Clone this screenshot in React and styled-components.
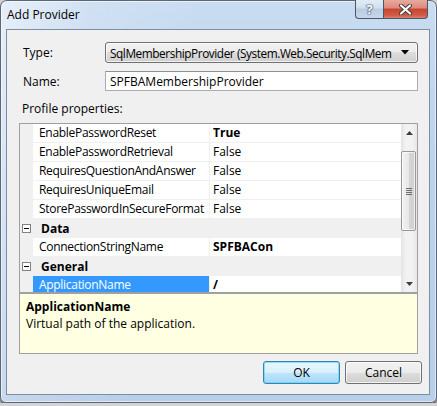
import React from 'react';
import styled, { createGlobalStyle } from 'styled-components';

const GlobalStyle = createGlobalStyle`
    html, body {
        margin: 0;
        padding: 0;
        background: #d4d4d4;
    }
    body {
        font-family: "Open Sans", "Noto Sans", "Liberation Sans", sans-serif;
        font-size: 12px;
        color: #000;
    }
`;

const rows = [
    { type: 'prop', name: 'EnablePasswordReset', value: 'True', bold: true },
    { type: 'prop', name: 'EnablePasswordRetrieval', value: 'False' },
    { type: 'prop', name: 'RequiresQuestionAndAnswer', value: 'False' },
    { type: 'prop', name: 'RequiresUniqueEmail', value: 'False' },
    { type: 'prop', name: 'StorePasswordInSecureFormat', value: 'False' },
    { type: 'cat', name: 'Data' },
    { type: 'prop', name: 'ConnectionStringName', value: 'SPFBACon', bold: true },
    { type: 'cat', name: 'General' },
    { type: 'prop', name: 'ApplicationName', value: '/', bold: true, selected: true },
];

function App() {
    return (
        <>
            <GlobalStyle />
            <Window>
                <TitleBar>
                    <Title>Add Provider</Title>
                    <CaptionButtons>
                        <HelpButton>?</HelpButton>
                        <CloseButton>
                            <svg width="13" height="11" viewBox="0 0 13 11">
                                <path d="M2 1.5 L11 9.5 M11 1.5 L2 9.5" stroke="#3b3b3b" strokeWidth="4" strokeLinecap="round" />
                                <path d="M2 1.5 L11 9.5 M11 1.5 L2 9.5" stroke="#fff" strokeWidth="2.2" strokeLinecap="round" />
                            </svg>
                        </CloseButton>
                    </CaptionButtons>
                </TitleBar>

                <Client>
                    <FormRow>
                        <Label>Type:</Label>
                        <Combo>
                            <ComboText>SqlMembershipProvider (System.Web.Security.SqlMem</ComboText>
                            <svg width="8" height="5" viewBox="0 0 8 5">
                                <path d="M0 0 L8 0 L4 4.5 Z" fill="#000" />
                            </svg>
                        </Combo>
                    </FormRow>
                    <FormRow $top={8}>
                        <Label>Name:</Label>
                        <TextBox>SPFBAMembershipProvider</TextBox>
                    </FormRow>

                    <SectionLabel>Profile properties:</SectionLabel>

                    <PropertyGrid>
                        <GridBody>
                            {rows.map(r =>
                                r.type === 'cat' ? (
                                    <CategoryRow key={r.name}>
                                        <Expander>
                                            <svg width="9" height="9" viewBox="0 0 9 9">
                                                <rect x="0.5" y="0.5" width="8" height="8" fill="#fff" stroke="#828282" />
                                                <path d="M2 4.5 H7" stroke="#000" />
                                            </svg>
                                        </Expander>
                                        <CategoryName>{r.name}</CategoryName>
                                    </CategoryRow>
                                ) : (
                                    <PropRow key={r.name}>
                                        <Margin />
                                        <PropName $selected={r.selected}>{r.name}</PropName>
                                        <PropValue $bold={r.bold}>{r.value}</PropValue>
                                    </PropRow>
                                )
                            )}
                        </GridBody>
                        <ScrollBar>
                            <ScrollArrow>
                                <svg width="7" height="4" viewBox="0 0 7 4">
                                    <path d="M0 4 L3.5 0 L7 4 Z" fill="#3d3d3d" />
                                </svg>
                            </ScrollArrow>
                            <Thumb>
                                <Grip />
                            </Thumb>
                            <ScrollArrow $down>
                                <svg width="7" height="4" viewBox="0 0 7 4">
                                    <path d="M0 0 L7 0 L3.5 4 Z" fill="#3d3d3d" />
                                </svg>
                            </ScrollArrow>
                        </ScrollBar>
                    </PropertyGrid>

                    <Description>
                        <DescTitle>ApplicationName</DescTitle>
                        <DescText>Virtual path of the application.</DescText>
                    </Description>

                    <ButtonRow>
                        <DialogButton $default>OK</DialogButton>
                        <DialogButton>Cancel</DialogButton>
                    </ButtonRow>
                </Client>
            </Window>
        </>
    );
}

const Window = styled.div`
    box-sizing: border-box;
    width: 437px;
    height: 403px;
    display: flex;
    flex-direction: column;
    border: 1px solid #5a6779;
    border-radius: 7px 7px 6px 6px;
    background:
        linear-gradient(100deg, rgba(255, 255, 255, 0.55) 0%, rgba(255, 255, 255, 0.15) 18%, rgba(255, 255, 255, 0) 40%),
        linear-gradient(180deg, #c9dcf1 0%, #bdd3ec 40%, #b8cfe9 100%);
    box-shadow: 0 2px 3px rgba(0, 0, 0, 0.75), inset 0 0 0 1px rgba(255, 255, 255, 0.55);
`;

const TitleBar = styled.div`
    height: 28px;
    display: flex;
    align-items: flex-start;
`;

const Title = styled.div`
    padding-left: 6px;
    line-height: 27px;
    color: #000;
`;

const CaptionButtons = styled.div`
    margin-left: auto;
    margin-right: 8px;
    display: flex;
    margin-top: -1px;
`;

const CaptionButton = styled.div`
    box-sizing: border-box;
    height: 19px;
    display: flex;
    align-items: center;
    justify-content: center;
    border: 1px solid #4a5669;
    border-top: none;
`;

const HelpButton = styled(CaptionButton)`
    width: 28px;
    border-right: none;
    border-radius: 0 0 0 4px;
    background: linear-gradient(180deg, #e2ebf5 0%, #d1dfee 45%, #b9cbe0 50%, #c6d7ea 100%);
    font-size: 13px;
    font-weight: 700;
    color: #fff;
    text-shadow: 0 0 1px #3a4656, 0 0 1px #3a4656, 0 0 2px #3a4656;
`;

const CloseButton = styled(CaptionButton)`
    width: 45px;
    border-radius: 0 0 4px 0;
    background: linear-gradient(180deg, #e9a99e 0%, #dc8a7c 45%, #c7442f 50%, #d15a47 85%, #e0826c 100%);
`;

const Client = styled.div`
    flex: 1;
    margin: 0 6px 7px 5px;
    padding: 12px 11px 10px 12px;
    display: flex;
    flex-direction: column;
    background: #f0f0f0;
    border: 1px solid #7d8ea3;
`;

const FormRow = styled.div`
    display: grid;
    grid-template-columns: 86px minmax(0, 1fr);
    align-items: center;
    margin-top: ${p => p.$top || 0}px;
`;

const Label = styled.div`
    padding-left: 4px;
`;

const Combo = styled.div`
    box-sizing: border-box;
    min-width: 0;
    height: 21px;
    display: flex;
    align-items: center;
    gap: 4px;
    padding: 0 8px 0 4px;
    border: 1px solid #707070;
    border-radius: 3px;
    background: linear-gradient(180deg, #f2f2f2 0%, #ebebeb 50%, #dddddd 50%, #cfcfcf 100%);
    box-shadow: inset 0 0 0 1px rgba(255, 255, 255, 0.7);
`;

const ComboText = styled.div`
    flex: 1;
    min-width: 0;
    overflow: hidden;
    white-space: nowrap;
    font-size: 11.8px;
    letter-spacing: -0.42px;
`;

const TextBox = styled.div`
    box-sizing: border-box;
    height: 20px;
    display: flex;
    align-items: center;
    padding-left: 4px;
    background: #fff;
    border: 1px solid #abadb3;
    border-top-color: #8e9299;
`;

const SectionLabel = styled.div`
    margin: 10px 0 6px 3px;
    height: 16px;
    line-height: 16px;
`;

const PropertyGrid = styled.div`
    box-sizing: border-box;
    height: 170px;
    display: flex;
    border: 1px solid #a0a0a0;
    background: #fff;
    overflow: hidden;
`;

const GridBody = styled.div`
    flex: 1;
    overflow: hidden;
`;

const PropRow = styled.div`
    box-sizing: border-box;
    height: 19px;
    display: grid;
    grid-template-columns: 13px 177px 1fr;
    border-bottom: 1px solid #f0f0f0;
`;

const Margin = styled.div`
    background: #f0f0f0;
`;

const PropName = styled.div`
    padding-left: 6px;
    line-height: 18px;
    white-space: nowrap;
    letter-spacing: -0.3px;
    background: ${p => (p.$selected ? '#3399ff' : '#fff')};
    color: ${p => (p.$selected ? '#fff' : '#000')};
    border-right: 1px solid #f0f0f0;
`;

const PropValue = styled.div`
    padding-left: 3px;
    line-height: 18px;
    font-weight: ${p => (p.$bold ? 700 : 400)};
`;

const CategoryRow = styled.div`
    box-sizing: border-box;
    height: 19px;
    display: flex;
    align-items: center;
    background: #f0f0f0;
`;

const Expander = styled.div`
    width: 19px;
    padding-left: 2px;
    display: flex;
    align-items: center;
`;

const CategoryName = styled.div`
    font-weight: 700;
    line-height: 18px;
`;

const ScrollBar = styled.div`
    width: 16px;
    display: flex;
    flex-direction: column;
    background: linear-gradient(90deg, #e3e3e3 0%, #f2f2f2 30%, #f2f2f2 70%, #e8e8e8 100%);
`;

const ScrollArrow = styled.div`
    height: 17px;
    display: flex;
    align-items: center;
    justify-content: center;
    margin-top: ${p => (p.$down ? 'auto' : '0')};
`;

const Thumb = styled.div`
    box-sizing: border-box;
    margin: 10px 1px 0 0;
    height: 80px;
    display: flex;
    align-items: center;
    justify-content: center;
    border: 1px solid #979797;
    border-radius: 2px;
    background: linear-gradient(90deg, #f2f2f2 0%, #e8e8e8 50%, #d6d6d6 51%, #cfcfcf 100%);
    box-shadow: inset 0 0 0 1px rgba(255, 255, 255, 0.7);
`;

const Grip = styled.div`
    width: 6px;
    height: 7px;
    background: repeating-linear-gradient(180deg, #6b6b6b 0 1px, transparent 1px 2px);
`;

const Description = styled.div`
    box-sizing: border-box;
    height: 61px;
    padding: 5px 6px;
    background: #ffffe1;
    border: 1px solid #a0a0a0;
`;

const DescTitle = styled.div`
    font-weight: 700;
    line-height: 16px;
`;

const DescText = styled.div`
    line-height: 18px;
`;

const ButtonRow = styled.div`
    margin: 7px -4px 0 0;
    display: flex;
    justify-content: flex-end;
    gap: 5px;
`;

const DialogButton = styled.div`
    box-sizing: border-box;
    width: 77px;
    height: 23px;
    display: flex;
    align-items: center;
    justify-content: center;
    border: 1px solid ${p => (p.$default ? '#3c7fb1' : '#707070')};
    border-radius: 3px;
    background: ${p =>
        p.$default
            ? 'linear-gradient(180deg, #eaf6fd 0%, #d9f0fc 50%, #bee6fd 50%, #a7d9f5 100%)'
            : 'linear-gradient(180deg, #f2f2f2 0%, #ebebeb 50%, #dddddd 50%, #cfcfcf 100%)'};
    box-shadow: inset 0 0 0 1px ${p => (p.$default ? 'rgba(72, 214, 250, 0.6)' : 'rgba(255, 255, 255, 0.75)')};
`;

export default App;
